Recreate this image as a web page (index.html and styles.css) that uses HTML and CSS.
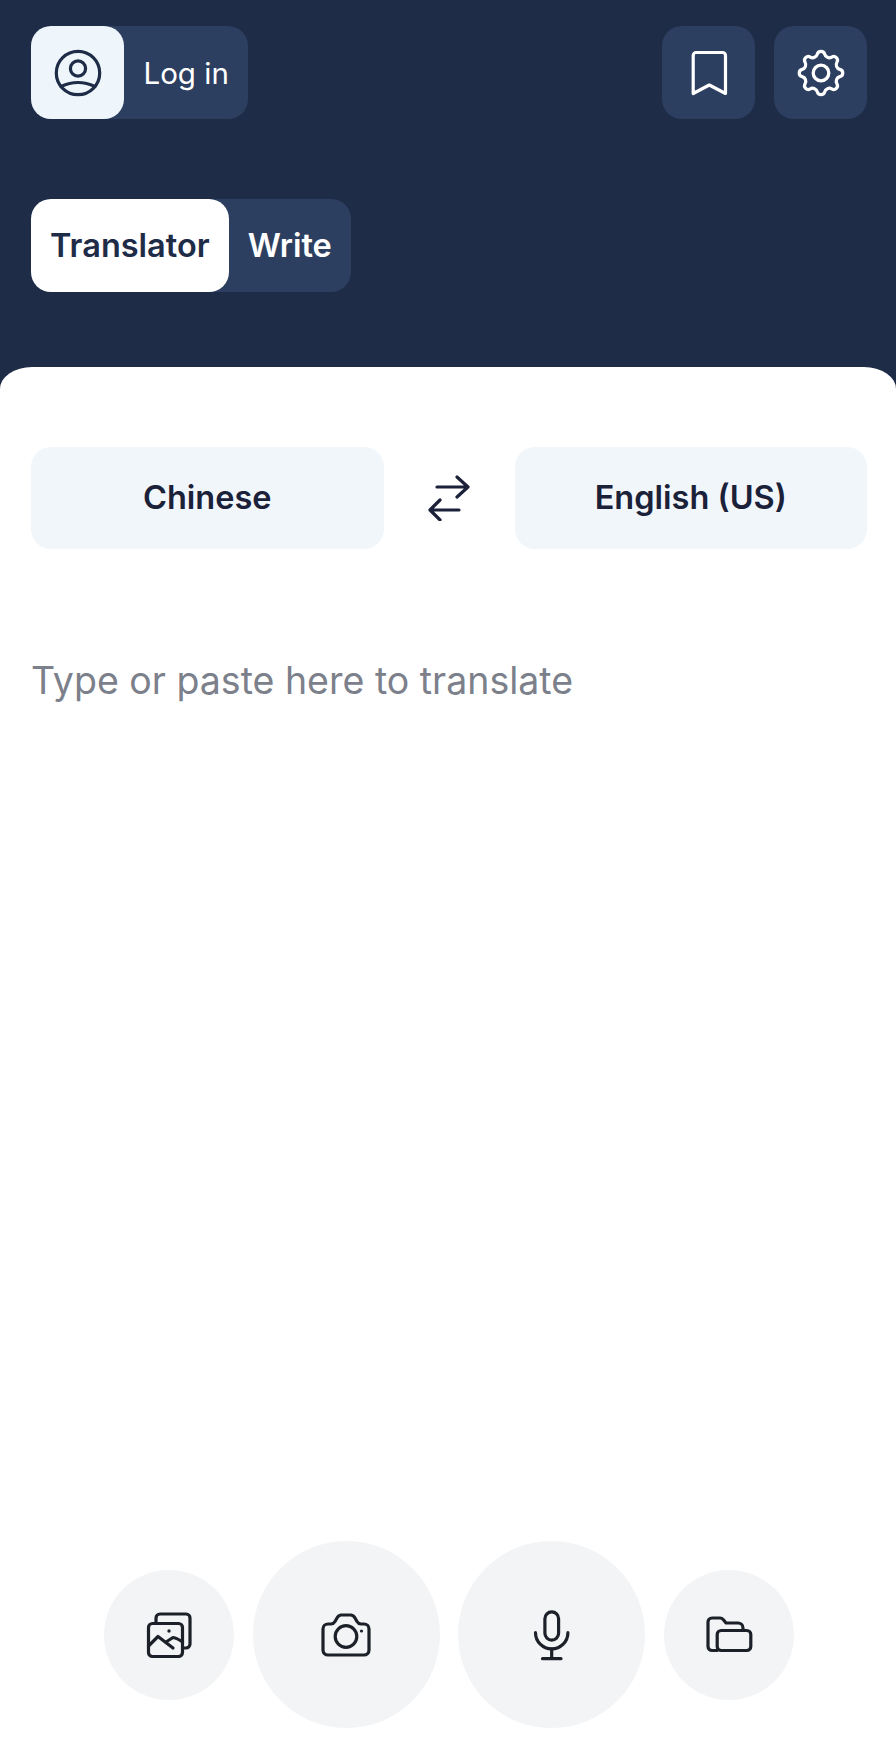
FILE: index.html
```html
<!DOCTYPE html>
<html lang="en">
<head>
<meta charset="utf-8">
<title>Translator</title>
<link rel="stylesheet" href="styles.css">
</head>
<body>
<div class="app">
  <header class="header">
    <div class="top-row">
      <div class="pill login">
        <span class="login-icon">
          <svg class="ic" width="48" height="48" viewBox="0 0 48 48" fill="none" stroke="#1f2c47" stroke-width="3.2" stroke-linecap="round" stroke-linejoin="round"><circle cx="24" cy="24" r="21.7"/><circle cx="24" cy="19.5" r="7.6"/><path d="M7 37.5Q24 29.5 41 37.5"/></svg>
        </span>
        <span class="login-text">Log in</span>
      </div>
      <div class="actions">
        <button class="square" aria-label="Saved">
          <svg class="ic" width="48" height="48" viewBox="0 0 48 48" fill="none" stroke="#fff" stroke-width="3.2" stroke-linecap="round" stroke-linejoin="round"><path d="M8.2 44.5V6.5a3 3 0 0 1 3-3H37.5a3 3 0 0 1 3 3V44.5L24.3 36Z"/></svg>
        </button>
        <button class="square" aria-label="Settings">
          <svg class="ic" width="52" height="52" viewBox="0 0 48 48" fill="none" stroke="#fff" stroke-width="3" stroke-linecap="round" stroke-linejoin="round"><path d="M20.6 6.6A3.5 3.5 0 0 1 27.4 6.6A4.4 4.4 0 0 0 33.9 9.3A3.5 3.5 0 0 1 38.7 14.1A4.4 4.4 0 0 0 41.4 20.6A3.5 3.5 0 0 1 41.4 27.4A4.4 4.4 0 0 0 38.7 33.9A3.5 3.5 0 0 1 33.9 38.7A4.4 4.4 0 0 0 27.4 41.4A3.5 3.5 0 0 1 20.6 41.4A4.4 4.4 0 0 0 14.1 38.7A3.5 3.5 0 0 1 9.3 33.9A4.4 4.4 0 0 0 6.6 27.4A3.5 3.5 0 0 1 6.6 20.6A4.4 4.4 0 0 0 9.3 14.1A3.5 3.5 0 0 1 14.1 9.3A4.4 4.4 0 0 0 20.6 6.6Z"/><circle cx="24" cy="24" r="7.2"/></svg>
        </button>
      </div>
    </div>
    <div class="pill tabs">
      <span class="tab active">Translator</span>
      <span class="tab">Write</span>
    </div>
  </header>
  <main class="sheet">
    <div class="langs">
      <button class="lang">Chinese</button>
      <span class="swap">
        <svg class="ic" width="42" height="48" viewBox="0 0 42 48" fill="none" stroke="#1a2138" stroke-width="3.2" stroke-linecap="round" stroke-linejoin="round"><path d="M9 14H40M29 4L40 14L29 24"/><path d="M31 37H2M12 27L2 37L12 47"/></svg>
      </span>
      <button class="lang">English (US)</button>
    </div>
    <p class="placeholder">Type or paste here to translate</p>
    <div class="tools">
      <button class="tool small" aria-label="Images">
        <svg class="ic" width="48" height="48" viewBox="0 0 48 48" fill="none" stroke="#1c2029" stroke-width="3.2" stroke-linecap="round" stroke-linejoin="round"><rect x="3.5" y="12.5" width="34" height="33" rx="4"/><path d="M11 12V7a4 4 0 0 1 4-4H41a4 4 0 0 1 4 4V33a4 4 0 0 1-4 4H38"/><path d="M3.5 35L13 25.5L28 37"/><path d="M21 31L28 26.5Q32 27 37.5 31"/><circle cx="24" cy="20" r="1.7" fill="#1c2029" stroke="none"/></svg>
      </button>
      <button class="tool large" aria-label="Camera">
        <svg class="ic" width="52" height="52" viewBox="0 0 52 52" fill="none" stroke="#1c2029" stroke-width="3.2" stroke-linecap="round" stroke-linejoin="round"><path d="M8 15H11a5 5 0 0 0 4-2.5L17 9a5 5 0 0 1 4-3H31a5 5 0 0 1 4 3L37 12.5a5 5 0 0 0 4 2.5H44a5 5 0 0 1 5 5V41a5 5 0 0 1-5 5H8a5 5 0 0 1-5-5V20a5 5 0 0 1 5-5Z"/><circle cx="26" cy="27.5" r="10.8"/><circle cx="41.5" cy="22" r="1.6" fill="#1c2029" stroke="none"/></svg>
      </button>
      <button class="tool large" aria-label="Microphone">
        <svg class="ic" width="52" height="52" viewBox="0 0 52 52" fill="none" stroke="#1c2029" stroke-width="3.2" stroke-linecap="round" stroke-linejoin="round"><rect x="18.9" y="2.8" width="13.7" height="28.4" rx="6.85"/><path d="M9.5 23.7a16.2 16.2 0 0 0 32.4 0"/><path d="M25.7 40V49.7M16.5 49.7H35"/></svg>
      </button>
      <button class="tool small" aria-label="Files">
        <svg class="ic" width="50" height="50" viewBox="-1 0 50 50" fill="none" stroke="#1c2029" stroke-width="3.2" stroke-linecap="round" stroke-linejoin="round"><rect x="12.2" y="20.5" width="33.6" height="20" rx="4"/><path d="M12 40.5H7a4 4 0 0 1-4-4V12a4 4 0 0 1 4-4H15a4 4 0 0 1 3.2 1.6L21 13H33a5 5 0 0 1 5 5V20"/></svg>
      </button>
    </div>
  </main>
</div>
</body>
</html>
```
FILE: styles.css
```css
* {
  box-sizing: border-box;
}

html,
body {
  margin: 0;
  height: 100%;
}

body {
  font-family: Inter, "Liberation Sans", sans-serif;
  background: #1f2c47;
}

button {
  border: 0;
  padding: 0;
  font: inherit;
  cursor: pointer;
}

.ic {
  display: block;
}

.app {
  display: flex;
  flex-direction: column;
  height: 1756px;
}

.header {
  display: flex;
  flex-direction: column;
  align-items: flex-start;
  gap: 80px;
  height: 367px;
  padding: 26px 29px 0 31px;
}

.top-row {
  display: flex;
  justify-content: space-between;
  width: 100%;
}

.pill {
  display: flex;
  height: 93px;
  background: #2d3f60;
  border-radius: 20px;
}

.login {
  align-items: center;
}

.login-icon {
  display: flex;
  align-items: center;
  justify-content: center;
  width: 93px;
  height: 93px;
  background: #eef6fb;
  border-radius: 20px;
}

.login-text {
  padding: 0 19px 0 19.5px;
  font-size: 29.5px;
  color: #fff;
}

.actions {
  display: flex;
  gap: 19px;
}

.square {
  display: flex;
  align-items: center;
  justify-content: center;
  width: 93px;
  height: 93px;
  background: #2d3f60;
  border-radius: 20px;
}

.tabs {
  align-items: stretch;
  font-size: 32.5px;
  font-weight: 600;
}

.tab {
  display: flex;
  align-items: center;
  padding: 0 19px;
  color: #fff;
  border-radius: 20px;
}

.tab.active {
  background: #fff;
  color: #1f2c47;
}

.sheet {
  flex: 1;
  display: flex;
  flex-direction: column;
  padding: 80px 29px 28px 31px;
  background: #fff;
  border-radius: 32px 32px 0 0 / 22px 22px 0 0;
}

.langs {
  display: flex;
  align-items: center;
}

.lang {
  flex: 1;
  height: 102px;
  padding-bottom: 2px;
  background: #f1f6fb;
  border-radius: 20px;
  font-size: 32.5px;
  font-weight: 600;
  color: #1a2138;
}

.swap {
  display: flex;
  justify-content: center;
  width: 131px;
  padding-bottom: 2px;
}

.placeholder {
  flex: 1;
  margin: 110px 0 0;
  font-size: 37.5px;
  line-height: 44px;
  color: #7c808b;
}

.tools {
  display: flex;
  align-items: center;
  justify-content: center;
  gap: 18.5px;
}

.tool {
  display: flex;
  align-items: center;
  justify-content: center;
  flex: none;
  background: #f3f4f6;
  border-radius: 50%;
}

.small {
  width: 130px;
  height: 130px;
}

.large {
  width: 187px;
  height: 187px;
}
```
